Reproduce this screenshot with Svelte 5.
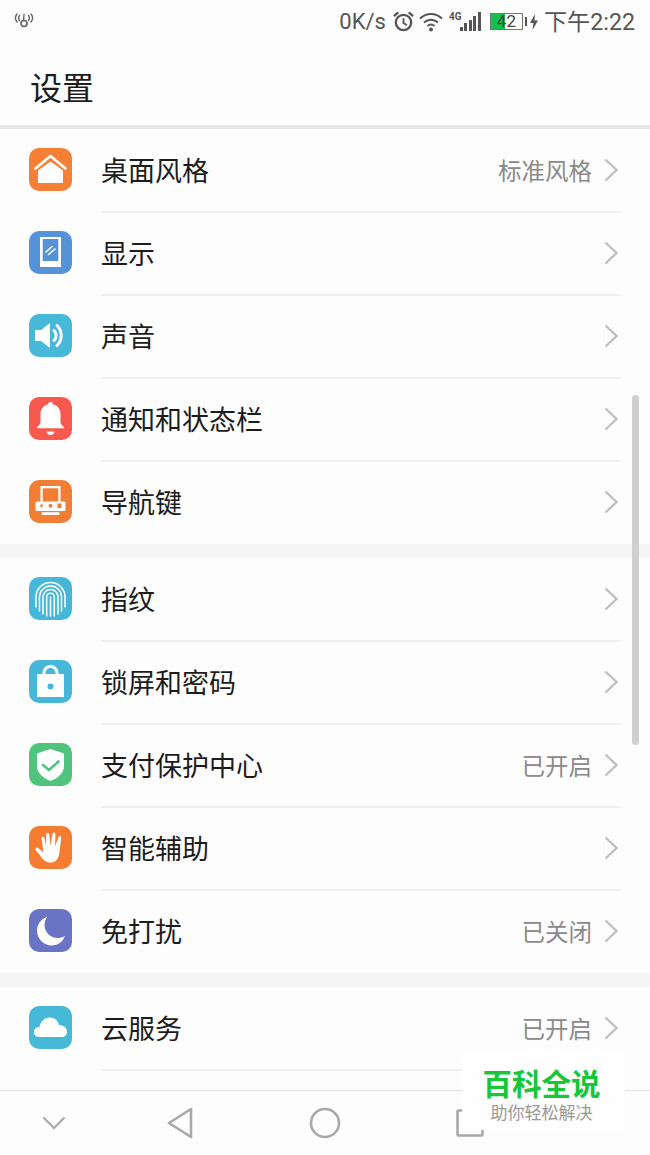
<script lang="ts">
  const groups = [
    [
      { icon: 'home', color: '#f47f35', label: '桌面风格', value: '标准风格' },
      { icon: 'display', color: '#5592d8', label: '显示' },
      { icon: 'sound', color: '#46b9d8', label: '声音' },
      { icon: 'bell', color: '#f7594f', label: '通知和状态栏' },
      { icon: 'nav', color: '#f27d35', label: '导航键' },
    ],
    [
      { icon: 'finger', color: '#46b7d8', label: '指纹' },
      { icon: 'lock', color: '#46b7d8', label: '锁屏和密码' },
      { icon: 'shield', color: '#50c47d', label: '支付保护中心', value: '已开启' },
      { icon: 'hand', color: '#f47d32', label: '智能辅助' },
      { icon: 'moon', color: '#6a74c5', label: '免打扰', value: '已关闭' },
    ],
    [
      { icon: 'cloud', color: '#46b9d8', label: '云服务', value: '已开启' },
      { icon: '', color: 'transparent', label: '' },
    ],
  ]
</script>

{#snippet glyph(name)}
  <svg viewBox="0 0 43 43" width="43" height="43">
    {#if name === 'home'}
      <path d="M9 22.500 21.500 13.500 34 22.500V35H9Z" fill="#fff" />
      <path d="M6.500 20.500 21.500 8 36.500 20.500" fill="none" stroke="#fff" stroke-width="2.600" stroke-linecap="round" stroke-linejoin="round" />
    {:else if name === 'display'}
      <rect x="11" y="6" width="21" height="30" fill="#fff" />
      <rect x="13.700" y="8" width="15.600" height="22" fill="#5592d8" />
      <path d="M17 21 23 15.500M19.500 23.500 26 18" stroke="#fff" stroke-width="1.600" stroke-linecap="round" />
    {:else if name === 'sound'}
      <path d="M6 16H12L21 9V34L12 27H6Z" fill="#fff" />
      <path d="M25 16.500a7 7 0 0 1 0 10M28 11.500a14 14 0 0 1 0 20" fill="none" stroke="#fff" stroke-width="3" stroke-linecap="round" />
    {:else if name === 'bell'}
      <path d="M21.500 5c1.600 0 2.600 1 2.600 2.600 5 1.200 7.400 5 7.400 10v7.400c0 2 1.700 3.400 3.600 5.200v1H8v-1c2-1.800 3.500-3.200 3.500-5.200v-7.400c0-5 2.500-8.800 7.400-10C18.900 6 19.900 5 21.500 5Z" fill="#fff" />
      <path d="M17.500 34.500H25.500C25 37 23.500 38 21.500 38S18 37 17.500 34.500Z" fill="#fff" />
    {:else if name === 'nav'}
      <path d="M11.500 6H31.500V21.500H35a1.500 1.500 0 0 1 1.500 1.500V29.500a1.500 1.500 0 0 1-1.500 1.500H8a1.500 1.500 0 0 1-1.500-1.500V23A1.500 1.500 0 0 1 8 21.500H11.500Z" fill="#fff" />
      <rect x="13.700" y="8.300" width="15.600" height="13.200" fill="#f27d35" />
      <path d="M13.500 23.500 10.500 25.700 13.500 28Z" fill="#f27d35" />
      <circle cx="21.500" cy="25.700" r="2" fill="#f27d35" />
      <rect x="28.500" y="23.500" width="4" height="4.500" fill="#f27d35" />
      <rect x="12.500" y="32.300" width="18" height="2.800" rx="1" fill="#fff" />
    {:else if name === 'finger'}
      <g fill="none" stroke="#fff" stroke-width="1.500" stroke-linecap="round">
        <path d="M7 30V20a14.500 14.500 0 0 1 29 0V30" />
        <path d="M10.500 34V20a11 11 0 0 1 22 0V34" />
        <path d="M14 37V20a7.500 7.500 0 0 1 15 0V37" />
        <path d="M17.700 39V20a3.800 3.800 0 0 1 7.600 0V39" />
        <path d="M21.500 20V39" />
      </g>
    {:else if name === 'lock'}
      <path d="M15 15V13a6.500 6.500 0 0 1 13 0V15" fill="none" stroke="#fff" stroke-width="3" />
      <path d="M8 14H35V37H8Z" fill="#fff" />
      <circle cx="21.500" cy="26.500" r="3" fill="#46b7d8" />
    {:else if name === 'shield'}
      <path d="M21.500 6 35 10.500V23C35 30 29 35 21.500 38 14 35 8 30 8 23V10.500Z" fill="#fff" />
      <path d="M14 22 20 27 29.500 18.500" fill="none" stroke="#50c47d" stroke-width="2.600" stroke-linecap="round" stroke-linejoin="round" />
    {:else if name === 'hand'}
      <path d="M12.500 12C13 10 15 10.500 15.500 12L17 20 17.200 8.500C17.500 6.500 20 6.500 20.300 8.500L21.500 20 23.500 7.800C24 6 26.500 6.300 26.500 8.300L26 20.500 29.500 11C30.200 9.300 32.500 10 32.200 12L30.500 26C30 32 27 37 21 36.500 15 36 13 32 10 28L6.800 24.500C5.500 22.800 7.500 20.800 9.500 22.200L14.500 26.500Z" fill="#fff" />
    {:else if name === 'moon'}
      <path d="M18.500 7.500C13 9.500 8 14.500 8 21.500 8 30 15 36.500 22.500 36.500 29 36.500 34 32.500 36 27 33.500 28.500 31 29 28.500 29 21.500 29 15.500 23 15.500 16 15.500 13 16.500 10 18.500 7.500Z" fill="#fff" />
    {:else if name === 'cloud'}
      <path d="M10 31C7 31 5 28.800 5 26 5 23 7 21 10.500 21 11.500 15.500 15.500 11.500 21 11.500 25.500 11.500 29 14.500 30 19 35 19 38 22 38 25.500 38 28.800 35.500 31 33 31Z" fill="#fff" />
    {/if}
  </svg>
{/snippet}

<div class="phone">
  <div class="status">
    <svg class="hotspot" viewBox="0 0 22 18" width="22" height="18">
      <g fill="none" stroke="#666" stroke-width="1.400" stroke-linecap="round">
        <path d="M4 3C2 5.500 2 8.500 4 11M6.500 4.500C5.500 6 5.500 8 6.500 9.500M18 3C20 5.500 20 8.500 18 11M15.500 4.500C16.500 6 16.500 8 15.500 9.500" />
        <path d="M11 3.500 10.500 9.500" />
        <circle cx="11" cy="12.500" r="3" stroke-width="1.700" />
      </g>
    </svg>
    <div class="status-right">
      <span class="speed">0K/s</span>
      <svg viewBox="0 0 24 24" width="23" height="23">
        <circle cx="12" cy="13" r="8" fill="none" stroke="#555" stroke-width="2.400" />
        <path d="M12 8.500V13.500L15.500 16" fill="none" stroke="#555" stroke-width="2" />
        <path d="M2 6.500 6.500 2.500M22 6.500 17.500 2.500" stroke="#555" stroke-width="2.400" />
      </svg>
      <svg class="wifi" viewBox="0 0 24 20" width="24" height="20">
        <path d="M1 6.500C7.500 .5 16.500 .5 23 6.500M5 10.500C9 6.800 15 6.800 19 10.500M8.500 14C10.500 12.300 13.500 12.300 15.500 14" fill="none" stroke="#555" stroke-width="2" />
        <circle cx="12" cy="17.500" r="2" fill="#555" />
      </svg>
      <div class="signal">
        <span class="net">4G</span>
        <div class="bars">
          <i style="height: 4px"></i>
          <i style="height: 8px"></i>
          <i style="height: 11px"></i>
          <i style="height: 15px"></i>
          <i style="height: 19px"></i>
        </div>
      </div>
      <div class="battery">
        <div class="cell">
          <div class="level"></div>
          <span>42</span>
        </div>
        <div class="nub"></div>
      </div>
      <svg class="bolt" viewBox="0 0 8 16" width="8" height="16">
        <path d="M5 0 0 9H3.500L2.500 16 8 6.500H4.500Z" fill="#555" />
      </svg>
      <span class="time">下午2:22</span>
    </div>
  </div>

  <header>设置</header>

  <div class="list">
    {#each groups as rows}
      <section>
        {#each rows as row}
          <div class="row">
            {#if row.icon}
              <div class="icon" style="background: {row.color}">
                {@render glyph(row.icon)}
              </div>
            {/if}
            <div class="body">
              <span class="label">{row.label}</span>
              {#if row.value}<span class="value">{row.value}</span>{/if}
              {#if row.icon}
                <svg class="chev" viewBox="0 0 14 24" width="14" height="24">
                  <path d="M1.500 1.500 12.500 12 1.500 22.500" fill="none" stroke="#c0c0c0" stroke-width="2.400" />
                </svg>
              {/if}
            </div>
          </div>
        {/each}
      </section>
    {/each}
  </div>

  <nav>
    <svg viewBox="0 0 24 14" width="24" height="14">
      <path d="M1.500 1.500 12 12 22.500 1.500" fill="none" stroke="#a8a8a8" stroke-width="2.200" />
    </svg>
    <svg viewBox="0 0 28 32" width="28" height="32">
      <path d="M25 2V30L3 16Z" fill="none" stroke="#a8a8a8" stroke-width="2.600" stroke-linejoin="round" />
    </svg>
    <svg viewBox="0 0 32 32" width="32" height="32">
      <circle cx="16" cy="16" r="14" fill="none" stroke="#a8a8a8" stroke-width="2.600" />
    </svg>
    <svg viewBox="0 0 28 28" width="28" height="28">
      <rect x="1.500" y="1.500" width="25" height="25" rx="1" fill="none" stroke="#a8a8a8" stroke-width="2.600" />
    </svg>
  </nav>

  <div class="scrollbar"></div>

  <div class="mark">
    <strong>百科全说</strong>
    <small>助你轻松解决</small>
  </div>
</div>

<style>
  :global(body) {
    margin: 0;
    background: #fdfdfd;
  }

  .phone {
    position: relative;
    width: 650px;
    height: 1155px;
    overflow: hidden;
    display: flex;
    flex-direction: column;
    background: #fdfdfd;
    font-family: "Noto Sans CJK SC", "Noto Sans", sans-serif;
    color: #1c1c1c;
  }

  .status {
    height: 44px;
    flex-shrink: 0;
    display: flex;
    align-items: center;
    justify-content: space-between;
    padding: 0 15px 0 13px;
    color: #555;
  }

  .hotspot {
    margin-bottom: 4px;
  }

  .status-right {
    display: flex;
    align-items: center;
  }

  .speed {
    font-family: Roboto, sans-serif;
    font-size: 22px;
    margin-right: 6px;
  }

  .wifi {
    margin-left: 4px;
  }

  .signal {
    position: relative;
    width: 34px;
    height: 24px;
    margin-left: 4px;
  }

  .net {
    position: absolute;
    left: 2px;
    top: 2px;
    font: 700 10px/10px Roboto, sans-serif;
  }

  .bars {
    position: absolute;
    right: 0;
    bottom: 3px;
    display: flex;
    align-items: flex-end;
    gap: 1.500px;
  }

  .bars i {
    width: 3px;
    background: #555;
  }

  .battery {
    display: flex;
    align-items: center;
    margin-left: 9px;
  }

  .cell {
    position: relative;
    width: 31px;
    height: 15px;
    border: 1px solid #777;
  }

  .level {
    height: 100%;
    width: 45%;
    background: #12c24a;
  }

  .cell span {
    position: absolute;
    inset: 0;
    text-align: center;
    font: 17px/15px Roboto, sans-serif;
    color: #444;
  }

  .nub {
    width: 2px;
    height: 9px;
    margin-left: 2px;
    background: #555;
  }

  .bolt {
    margin-left: 3px;
  }

  .time {
    font-size: 23.200px;
    line-height: 1;
    margin-left: 6px;
    padding-top: 2px;
    font-family: Roboto, "Noto Sans CJK SC", sans-serif;
  }

  header {
    height: 79px;
    flex-shrink: 0;
    padding: 2px 0 0 30px;
    display: flex;
    align-items: center;
    font-size: 32px;
    border-bottom: 4px solid #e6e6e6;
  }

  .list {
    flex: 1;
    min-height: 0;
    overflow: hidden;
  }

  section + section {
    border-top: 14px solid #f5f5f5;
  }

  .row {
    display: flex;
    align-items: center;
    height: 83px;
    padding-left: 29px;
    padding-right: 29px;
    box-sizing: border-box;
  }

  .icon {
    width: 43px;
    height: 43px;
    margin-bottom: 2px;
    border-radius: 10px;
    flex-shrink: 0;
  }

  .icon svg {
    display: block;
  }

  .body {
    flex: 1;
    height: calc(100% + 1px);
    margin-left: 29px;
    margin-bottom: -1px;
    padding-bottom: 1px;
    display: flex;
    align-items: center;
    border-bottom: 2px solid #f0f0f0;
    box-sizing: border-box;
  }

  section:first-child .row:last-child .body,
  section:nth-child(2) .row:last-child .body {
    border-bottom-color: transparent;
  }

  .label {
    flex: 1;
    font-size: 27px;
  }

  .value {
    font-size: 23.500px;
    color: #8a8a8a;
    margin-right: 12px;
  }

  .chev {
    flex-shrink: 0;
    margin-right: 3px;
  }

  nav {
    height: 65px;
    flex-shrink: 0;
    box-sizing: border-box;
    border-top: 1px solid #e2e2e2;
    display: grid;
    grid-template-columns: 108px 144px 146px 144px;
    align-items: center;
    justify-items: center;
    background: #fdfdfd;
  }

  .scrollbar {
    position: absolute;
    left: 632px;
    top: 395px;
    width: 7px;
    height: 350px;
    border-radius: 4px;
    background: #cfcfcf;
  }

  .mark {
    position: absolute;
    left: 462px;
    top: 1050px;
    width: 163px;
    height: 80px;
    background: #fefefe;
    display: flex;
    flex-direction: column;
    align-items: center;
    padding: 17px 4px 0 0;
    box-sizing: border-box;
  }

  .mark strong {
    color: #17c639;
    font-size: 29.500px;
    line-height: 30px;
    font-weight: 700;
  }

  .mark small {
    color: #999;
    font-size: 17px;
    line-height: 22px;
    margin-top: 4px;
  }
</style>
